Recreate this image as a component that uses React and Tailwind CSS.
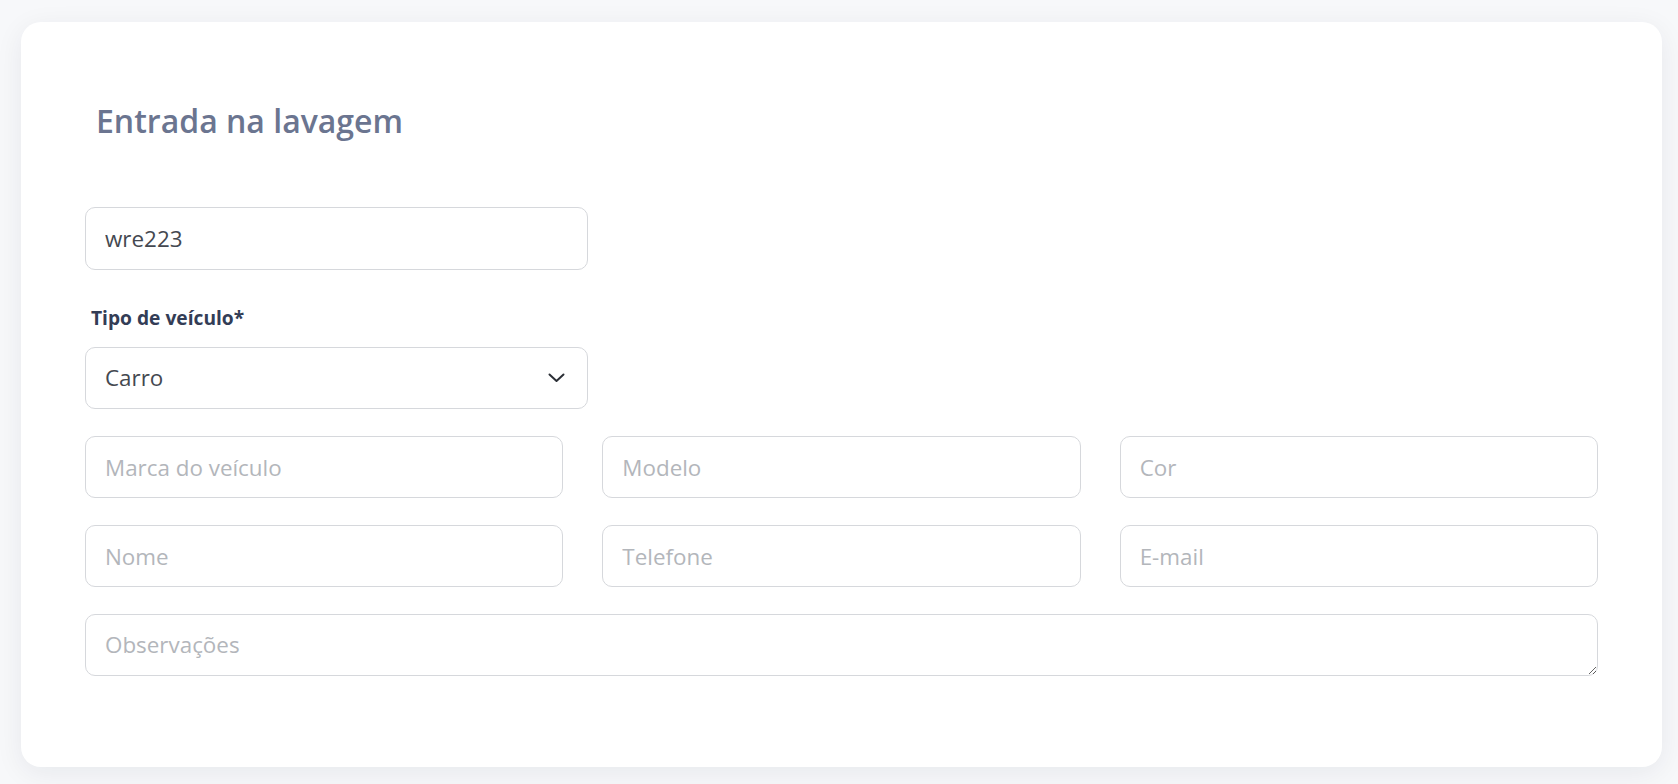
import React from "react";

const inputCls =
  "w-full h-[62px] rounded-[10px] border border-[#d6d8dc] bg-white px-[19px] text-[22.4px] text-[#444850] placeholder:text-[#b3b6bb] outline-none";

export default function App() {
  return (
    <div
      className="min-h-screen bg-[#f7f8fa] pl-[21px] pr-[16px] pt-[22px] pb-[17px]"
      style={{ fontFamily: "'Open Sans', 'Noto Sans', sans-serif" }}
    >
      <div className="rounded-[20px] bg-white shadow-[0_6px_28px_rgba(20,30,50,0.07)] px-[64px] pt-[79px] pb-[91px]">
        <h1 className="ml-[11px] text-[32px] leading-[40px] font-semibold text-[#6b7590]">
          Entrada na lavagem
        </h1>
        <div className="mt-[66px] w-[503px]">
          <input className={inputCls + " h-[63px]"} defaultValue="wre223" />
        </div>
        <label className="mt-[36px] ml-[6px] block text-[19.2px] leading-[24px] font-bold text-[#333d56]">
          Tipo de veículo*
        </label>
        <div className="relative mt-[17px] w-[503px]">
          <div className={inputCls + " flex items-center justify-between"}>
            <span>Carro</span>
            <svg width="17" height="10" viewBox="0 0 17 10" className="mr-[3px]">
              <polyline
                points="1.5,1.5 8.5,8 15.5,1.5"
                fill="none"
                stroke="#2b2f36"
                strokeWidth="2"
                strokeLinecap="round"
                strokeLinejoin="round"
              />
            </svg>
          </div>
        </div>
        <div className="mt-[27px] grid grid-cols-3 gap-x-[39px] gap-y-[27px]">
          <input className={inputCls} placeholder="Marca do veículo" />
          <input className={inputCls} placeholder="Modelo" />
          <input className={inputCls} placeholder="Cor" />
          <input className={inputCls} placeholder="Nome" />
          <input className={inputCls} placeholder="Telefone" />
          <input className={inputCls} placeholder="E-mail" />
        </div>
        <textarea
          className="mt-[27px] block w-full h-[62px] rounded-[10px] border border-[#d6d8dc] bg-white px-[19px] py-[14px] text-[22.4px] leading-[32px] text-[#444850] placeholder:text-[#b3b6bb] outline-none"
          placeholder="Observações"
        />
      </div>
    </div>
  );
}
